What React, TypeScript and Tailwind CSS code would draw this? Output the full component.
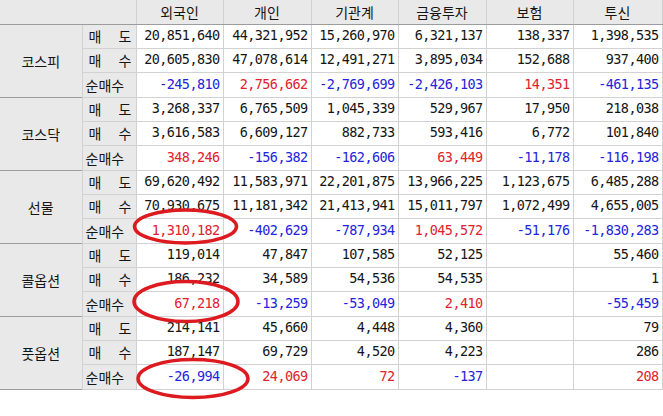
import React from "react";

type Cell = { v: string; c?: "r" | "b" };

const headers = ["외국인", "개인", "기관계", "금융투자", "보험", "투신"];

const n = (v: string): Cell => ({ v });
const r = (v: string): Cell => ({ v, c: "r" });
const b = (v: string): Cell => ({ v, c: "b" });
const e: Cell = { v: "" };

const groups: { name: string; rows: Cell[][] }[] = [
  {
    name: "코스피",
    rows: [
      [n("20,851,640"), n("44,321,952"), n("15,260,970"), n("6,321,137"), n("138,337"), n("1,398,535")],
      [n("20,605,830"), n("47,078,614"), n("12,491,271"), n("3,895,034"), n("152,688"), n("937,400")],
      [b("-245,810"), r("2,756,662"), b("-2,769,699"), b("-2,426,103"), r("14,351"), b("-461,135")],
    ],
  },
  {
    name: "코스닥",
    rows: [
      [n("3,268,337"), n("6,765,509"), n("1,045,339"), n("529,967"), n("17,950"), n("218,038")],
      [n("3,616,583"), n("6,609,127"), n("882,733"), n("593,416"), n("6,772"), n("101,840")],
      [r("348,246"), b("-156,382"), b("-162,606"), r("63,449"), b("-11,178"), b("-116,198")],
    ],
  },
  {
    name: "선물",
    rows: [
      [n("69,620,492"), n("11,583,971"), n("22,201,875"), n("13,966,225"), n("1,123,675"), n("6,485,288")],
      [n("70,930,675"), n("11,181,342"), n("21,413,941"), n("15,011,797"), n("1,072,499"), n("4,655,005")],
      [r("1,310,182"), b("-402,629"), b("-787,934"), r("1,045,572"), b("-51,176"), b("-1,830,283")],
    ],
  },
  {
    name: "콜옵션",
    rows: [
      [n("119,014"), n("47,847"), n("107,585"), n("52,125"), e, n("55,460")],
      [n("186,232"), n("34,589"), n("54,536"), n("54,535"), e, n("1")],
      [r("67,218"), b("-13,259"), b("-53,049"), r("2,410"), e, b("-55,459")],
    ],
  },
  {
    name: "풋옵션",
    rows: [
      [n("214,141"), n("45,660"), n("4,448"), n("4,360"), e, n("79")],
      [n("187,147"), n("69,729"), n("4,520"), n("4,223"), e, n("286")],
      [b("-26,994"), r("24,069"), r("72"), b("-137"), e, r("208")],
    ],
  },
];

const ko = "font-['Noto_Sans_CJK_KR',sans-serif] text-[14px]";

const SubLabel = ({ i }: { i: number }) => {
  if (i === 2) {
    return <span className="flex justify-between px-[3px]">순매수</span>;
  }
  return (
    <span className="flex justify-between pl-[6px] pr-[4px]">
      <span>매</span>
      <span>{i === 0 ? "도" : "수"}</span>
    </span>
  );
};

const App = () => {
  return (
    <div className="w-[663px] h-[416px] bg-white overflow-hidden">
      <div className="relative w-[662px]">
        <table className="w-[662px] table-fixed border-collapse text-[13.5px] leading-none text-[#151515]">
          <colgroup>
            <col className="w-[82px]" />
            <col className="w-[54px]" />
            <col className="w-[87px]" />
            <col className="w-[88px]" />
            <col className="w-[87px]" />
            <col className="w-[88px]" />
            <col className="w-[87px]" />
            <col className="w-[89px]" />
          </colgroup>
          <thead>
            <tr className="h-[24px]">
              <th colSpan={2} className="bg-[#e9e9e9] border-b border-b-[#9c9c9c] border-r border-r-[#d2d2d2]" />
              {headers.map((h) => (
                <th
                  key={h}
                  className={`bg-[#e9e9e9] font-normal text-center border-b border-b-[#9c9c9c] border-x border-x-[#d2d2d2] ${ko}`}
                >
                  {h}
                </th>
              ))}
            </tr>
          </thead>
          <tbody>
            {groups.map((g) =>
              g.rows.map((row, i) => (
                <tr key={g.name + i} className={i === 2 ? "h-[25px]" : "h-[24px]"}>
                  {i === 0 && (
                    <td
                      rowSpan={3}
                      className={`bg-[#e9e9e9] text-center border-r border-r-[#d2d2d2] border-t border-t-[#9c9c9c] ${ko}`}
                    >
                      {g.name}
                    </td>
                  )}
                  <td
                    className={`bg-[#e9e9e9] p-0 border border-[#d2d2d2] ${i === 0 ? "border-t-[#9c9c9c]" : ""} ${ko}`}
                  >
                    <SubLabel i={i} />
                  </td>
                  {row.map((c, j) => (
                    <td
                      key={j}
                      className={`text-right pr-[3px] p-0 border border-[#d2d2d2] font-['DejaVu_Sans_Mono',monospace] tracking-[-0.6px] ${
                        i === 0 ? "border-t-[#9c9c9c]" : ""
                      } ${c.c === "r" ? "text-[#e0222c]" : c.c === "b" ? "text-[#2424dc]" : ""}`}
                    >
                      {c.v}
                    </td>
                  ))}
                </tr>
              ))
            )}
            <tr className="h-[1px]">
              <td colSpan={8} className="border-t border-t-[#9c9c9c] p-0" />
            </tr>
          </tbody>
        </table>
        <svg className="absolute left-0 top-0 pointer-events-none" width="663" height="416">
          <ellipse cx="185.5" cy="226.5" rx="51" ry="16.5" fill="none" stroke="#dc1a1f" strokeWidth="3.5" />
          <ellipse cx="186" cy="301.5" rx="52" ry="20" fill="none" stroke="#dc1a1f" strokeWidth="3.5" />
          <ellipse cx="193" cy="378.5" rx="55" ry="19" fill="none" stroke="#dc1a1f" strokeWidth="3.5" />
        </svg>
      </div>
    </div>
  );
};

export default App;
